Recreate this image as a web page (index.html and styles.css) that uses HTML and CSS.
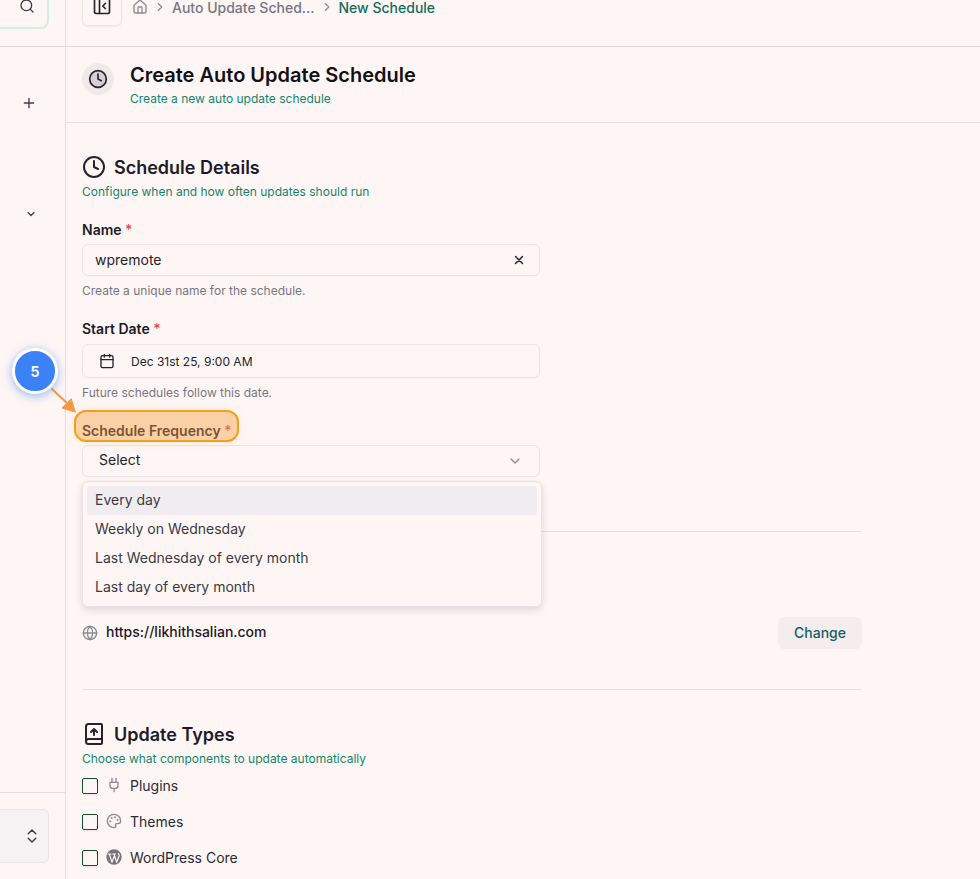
FILE: index.html
```html
<!DOCTYPE html>
<html lang="en">
<head>
<meta charset="utf-8">
<title>Create Auto Update Schedule</title>
<link rel="stylesheet" href="styles.css">
</head>
<body>
<div class="app">
  <aside class="sidebar">
    <div class="side-top">
      <div class="search">
        <svg class="ic16" viewBox="0 0 24 24"><circle cx="11" cy="11" r="8"/><path d="m21 21-4.3-4.3"/></svg>
      </div>
    </div>
    <div class="side-plus">
      <svg class="ic16 dark" viewBox="0 0 24 24"><path d="M5 12h14M12 5v14"/></svg>
    </div>
    <div class="side-chev">
      <svg class="ic12 dark thick" viewBox="0 0 24 24"><path d="m6 9 6 6 6-6"/></svg>
    </div>
    <div class="side-bottom">
      <div class="account">
        <svg class="ic18 dark" viewBox="0 0 24 24"><path d="m7 15 5 5 5-5M7 9l5-5 5 5"/></svg>
      </div>
    </div>
  </aside>
  <main class="main">
    <header class="topbar">
      <button class="collapse" type="button" aria-label="Toggle sidebar">
        <svg class="ic20 ink" viewBox="0 0 24 24"><rect x="3" y="3" width="18" height="18" rx="2"/><path d="M9 3v18M16 9l-3 3 3 3"/></svg>
      </button>
      <nav class="crumbs">
        <svg class="ic16 muted" viewBox="0 0 24 24"><path d="M15 21v-8a1 1 0 0 0-1-1h-4a1 1 0 0 0-1 1v8"/><path d="M3 10a2 2 0 0 1 .7-1.5l7-6a2 2 0 0 1 2.6 0l7 6A2 2 0 0 1 21 10v9a2 2 0 0 1-2 2H5a2 2 0 0 1-2-2z"/></svg>
        <svg class="ic14 muted" viewBox="0 0 24 24"><path d="m9 18 6-6-6-6"/></svg>
        <span class="crumb">Auto Update Sched...</span>
        <svg class="ic14 muted" viewBox="0 0 24 24"><path d="m9 18 6-6-6-6"/></svg>
        <span class="crumb current">New Schedule</span>
      </nav>
    </header>
    <section class="page-head">
      <div class="page-icon">
        <svg class="ic20 ink" viewBox="0 0 24 24"><circle class="clock-fill" cx="12" cy="12" r="10"/><path d="M12 6v6l4 2"/></svg>
      </div>
      <div>
        <h1>Create Auto Update Schedule</h1>
        <p class="teal">Create a new auto update schedule</p>
      </div>
    </section>
    <div class="content">
      <section class="details">
        <h2><svg class="ic24 ink" viewBox="0 0 24 24"><circle cx="12" cy="12" r="10"/><path d="M12 6v6l4 2"/></svg>Schedule Details</h2>
        <p class="teal sub">Configure when and how often updates should run</p>
        <div class="field field-name">
          <label>Name <span class="req">*</span></label>
          <div class="input"><span class="name-text">wpremote</span>
            <svg class="ic14 ink thick" viewBox="0 0 24 24"><path d="M18 6 6 18M6 6l12 12"/></svg>
          </div>
          <p class="help">Create a unique name for the schedule.</p>
        </div>
        <div class="field field-date">
          <label>Start Date <span class="req">*</span></label>
          <div class="input date">
            <svg class="ic16 ink" viewBox="0 0 24 24"><path d="M8 2v4M16 2v4"/><rect x="3" y="4" width="18" height="18" rx="2"/><path d="M3 10h18"/></svg>
            <span>Dec 31st 25, 9:00 AM</span>
          </div>
          <p class="help">Future schedules follow this date.</p>
        </div>
        <div class="field field-freq">
          <label>Schedule Frequency <span class="req">*</span></label>
          <div class="input select"><span class="input-text">Select</span>
            <svg class="ic16 muted" viewBox="0 0 24 24"><path d="m6 9 6 6 6-6"/></svg>
          </div>
        </div>
      </section>
      <hr class="rule rule-one">
      <div class="site-row">
        <div class="site">
          <svg class="ic16 muted" viewBox="0 0 24 24"><circle cx="12" cy="12" r="10"/><path d="M12 2a14.5 14.5 0 0 0 0 20 14.5 14.5 0 0 0 0-20M2 12h20"/></svg>
          <span class="site-url">https://likhithsalian.com</span>
        </div>
        <button class="change" type="button">Change</button>
      </div>
      <hr class="rule rule-two">
      <section class="types">
        <h2><svg class="ic24 ink" viewBox="0 0 24 24"><path d="M4 19.5v-15A2.5 2.5 0 0 1 6.500 2H19a1 1 0 0 1 1 1v18a1 1 0 0 1-1 1H6.500a2.500 2.500 0 0 1 0-5H20"/><path d="M12 13V7M9 10l3-3 3 3"/></svg>Update Types</h2>
        <p class="teal sub">Choose what components to update automatically</p>
        <ul class="checks">
          <li><span class="box"></span>
            <svg class="ic16 muted" viewBox="0 0 24 24"><path d="M12 22v-5M9 8V2M15 8V2M18 8v5a4 4 0 0 1-4 4h-4a4 4 0 0 1-4-4V8z"/></svg>
            Plugins</li>
          <li><span class="box"></span>
            <svg class="ic16 muted" viewBox="0 0 24 24"><path d="M12 22a10 10 0 1 1 10-10c0 2.800-2.200 4-4 4h-2a2 2 0 0 0-1.500 3.300c.6.800.2 2.700-2.500 2.700z"/><circle cx="13.500" cy="6.500" r=".6"/><circle cx="17.500" cy="10.500" r=".6"/><circle cx="6.500" cy="12.500" r=".6"/><circle cx="8.500" cy="7.500" r=".6"/></svg>
            Themes</li>
          <li><span class="box"></span>
            <svg class="ic16 wp" viewBox="0 0 24 24"><circle cx="12" cy="12" r="11.500"/><path class="wp-w" d="M3 7.500h4.500M5 7.500l4 12.500 3-8.500M10 7.500h4.500M12 7.500l4 12.500 3.500-9c.6-1.600.2-3-.7-4"/></svg>
            WordPress Core</li>
        </ul>
      </section>
    </div>
  </main>

  <div class="menu">
    <div class="option active">Every day</div>
    <div class="option">Weekly on Wednesday</div>
    <div class="option">Last Wednesday of every month</div>
    <div class="option">Last day of every month</div>
  </div>

  <div class="highlight"></div>
  <svg class="arrow" viewBox="0 0 30 30"><path class="arrow-line" d="M2 2 20 19"/><path class="arrow-head" d="M25 25 12 21 21 12z"/></svg>
  <div class="badge">5</div>
</div>
</body>
</html>
```
FILE: styles.css
```css
* { box-sizing: border-box; }
html, body { margin: 0; height: 100%; }
body {
  background: #fef6f4;
  color: #18181f;
  font-family: Inter, "Liberation Sans", sans-serif;
  overflow: hidden;
}
svg { fill: none; stroke: currentColor; stroke-width: 2; stroke-linecap: round; stroke-linejoin: round; flex: none; }
.ic12 { width: 12px; height: 12px; }
.ic14 { width: 14px; height: 14px; }
.ic16 { width: 16px; height: 16px; }
.ic18 { width: 18px; height: 18px; }
.ic20 { width: 20px; height: 20px; }
.ic24 { width: 24px; height: 24px; }
.ink { color: #25242c; }
.dark { color: #3f3f46; }
.muted { color: #8d8a94; }
.thick { stroke-width: 2.500; }

.app { position: relative; display: flex; width: 980px; height: 879px; overflow: hidden; }

.sidebar { width: 66px; flex: none; display: flex; flex-direction: column; border-right: 1px solid #e3dfe0; }
.side-top { height: 47px; border-bottom: 1px solid #dcd8da; }
.search {
  width: 49px; height: 30px;
  margin-top: -1px;
  display: flex; align-items: flex-end; justify-content: flex-end;
  padding: 0 12px 13px 0;
  border: 1px solid #d3efdf; border-left: 0;
  border-right-width: 2px; border-bottom-width: 2px;
  border-radius: 0 0 8px 0;
  color: #3f3f46;
}
.side-plus { display: flex; justify-content: center; padding: 48px 8px 0 0; }
.side-chev { display: flex; justify-content: center; padding: 97px 4px 0 0; }
.side-bottom { margin-top: auto; height: 87px; border-top: 1px solid #e3dfe0; padding-top: 16px; }
.account {
  width: 49px; height: 54px;
  display: flex; align-items: center; justify-content: flex-end;
  padding-right: 7px;
  background: #f6f1f2;
  border: 1px solid #e8e4e6; border-left: 0;
  border-radius: 0 6px 6px 0;
}

.main { flex: 1; min-width: 0; }
.topbar { height: 47px; border-bottom: 1px solid #dcd8da; display: flex; align-items: flex-start; padding-left: 16px; }
.collapse {
  width: 40px; height: 40px; margin-top: -14px;
  display: flex; align-items: center; justify-content: center;
  background: #fef6f4; border: 1px solid #e8e4e6; border-radius: 6px;
  box-shadow: 0 1px 2px rgba(0,0,0,.05);
  padding: 0;
}
.crumbs { display: flex; align-items: center; gap: 5px; margin: -2px 0 0 10px; height: 18px; font-size: 14px; font-weight: 500; }
.crumb { color: #777585; white-space: nowrap; }
.crumb.current { color: #0f6f5c; }

.page-head { height: 76px; border-bottom: 1px solid #e6e2e3; display: flex; align-items: flex-start; gap: 16px; padding: 16px 0 0 16px; }
.page-icon { width: 32px; height: 32px; border-radius: 50%; background: #efe9ea; display: flex; align-items: center; justify-content: center; }
.clock-fill { fill: #d6cfd3; }
h1 { margin: 0; font-size: 20px; line-height: 24px; font-weight: 600; color: #111118; }
.page-head p { margin: 4px 0 0; }
.teal { color: #13866f; font-size: 12px; line-height: 16px; }

.content { width: 812px; padding: 32px 16px 0; }
h2 { margin: 0; display: flex; align-items: center; gap: 8px; height: 24px; font-size: 18px; font-weight: 600; color: #1c1b2b; }
.sub { margin: 5px 0 0; }

.field { width: 458px; }
.field-name { margin-top: 21px; }
.field-date { margin-top: 21px; }
.field-freq { margin-top: 21px; }
label { display: block; font-size: 14px; line-height: 18px; font-weight: 600; color: #1c1b2b; }
.req { color: #ef4444; font-weight: 500; }
.input {
  height: 32px; margin-top: 5px;
  display: flex; align-items: center; justify-content: space-between;
  padding: 0 13px 0 12px;
  border: 1px solid #e8e3e6; border-radius: 6px;
  font-size: 14px; color: #25242c;
  box-shadow: 0 1px 1px rgba(0,0,0,.02);
}
.input.date { height: 34px; justify-content: flex-start; gap: 16px; padding-left: 16px; font-size: 12px; margin-top: 6px; }
.input.select { padding: 0 16px; margin-top: 5px; }
.input-text { padding-bottom: 3px; }
.name-text { padding-bottom: 1px; }
.help { margin: 7px 0 0; font-size: 12px; line-height: 16px; color: #797683; }

.rule { border: 0; border-top: 1px solid #e3dfe1; margin: 0; }
.rule-one { margin-top: 54px; }
.site-row { display: flex; justify-content: space-between; align-items: center; margin-top: 85px; height: 32px; }
.site { display: flex; align-items: center; gap: 8px; font-size: 14px; font-weight: 500; color: #1c1b2b; margin-top: -1px; }
.site-url { padding-bottom: 3px; }
.change { width: 84px; height: 32px; border: 0; border-radius: 6px; background: #f3eded; color: #155e63; font: 500 14px Inter, "Liberation Sans", sans-serif; padding: 0 0 2px; }
.rule-two { margin-top: 40px; }
.types { padding-top: 32px; }
.checks { list-style: none; margin: 9px 0 0; padding: 0; display: flex; flex-direction: column; gap: 18px; }
.checks li { display: flex; align-items: center; gap: 8px; height: 18px; font-size: 14px; color: #2a2a3a; }
.box { width: 16px; height: 16px; margin-top: 2px; border: 1.500px solid #14532d; border-radius: 2px; box-shadow: 0 1px 2px rgba(0,0,0,.08); }
.wp circle { fill: #75727c; stroke: none; }
.wp .wp-w { stroke: #fef6f4; stroke-width: 1.800; }

.menu {
  position: absolute; left: 82px; top: 481px; width: 460px; height: 126px;
  padding: 4px;
  background: #fef6f4;
  border: 1px solid #e8e3e6; border-radius: 6px;
  box-shadow: 0 3px 7px rgba(0,0,0,.13);
}
.option { height: 29px; display: flex; align-items: center; padding: 0 0 2px 8px; font-size: 14px; color: #3b3a45; border-radius: 4px; }
.option.active { background: #f0ecef; }

.highlight {
  position: absolute; left: 74px; top: 410px; width: 165px; height: 32px;
  border: 2px solid #f59e1b; border-radius: 12px;
  background: rgba(245,158,60,.42);
  box-shadow: 0 0 8px rgba(245,158,60,.15);
}
.arrow { position: absolute; left: 50px; top: 387px; width: 30px; height: 30px; }
.arrow-line { stroke: #f6993f; stroke-width: 2; }
.arrow-head { fill: #f6993f; stroke: #f6993f; stroke-width: 1; }
.badge {
  position: absolute; left: 12px; top: 348px; width: 46px; height: 46px;
  display: flex; align-items: center; justify-content: center;
  background: #3b82f6; color: #fff;
  border: 3px solid #fff; border-radius: 50%;
  font-size: 14px; font-weight: 700;
  box-shadow: 0 2px 10px rgba(59,130,246,.55);
}
```
